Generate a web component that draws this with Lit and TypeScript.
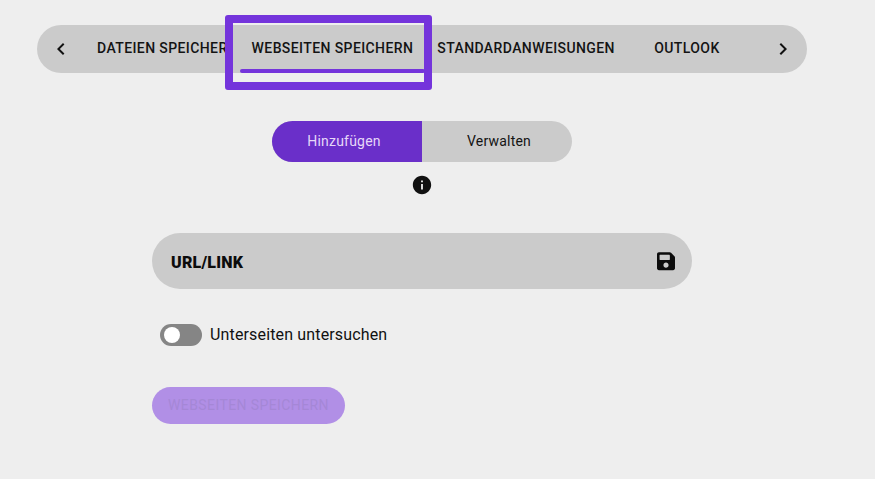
import { LitElement, html, css } from "lit";
import { customElement } from "lit/decorators.js";

@customElement("app-root")
class AppRoot extends LitElement {
  render() {
    return html`
      <div class="page">
        <nav class="tabbar">
          <button class="arrow">
            <svg viewBox="0 0 24 24" width="24" height="24"><path d="M15.41 7.41 14 6l-6 6 6 6 1.41-1.41L10.83 12z"></path></svg>
          </button>
          <div class="tabs">
            <div class="tab first"><span>DATEIEN SPEICHERN</span></div>
            <div class="tab active">WEBSEITEN SPEICHERN</div>
            <div class="tab">STANDARDANWEISUNGEN</div>
            <div class="tab outlook">OUTLOOK</div>
          </div>
          <button class="arrow">
            <svg viewBox="0 0 24 24" width="24" height="24"><path d="M10 6 8.59 7.41 13.17 12l-4.58 4.58L10 18l6-6z"></path></svg>
          </button>
          <div class="highlight"></div>
        </nav>

        <div class="mode">
          <div class="segment">
            <div class="seg on">Hinzufügen</div>
            <div class="seg off">Verwalten</div>
          </div>
          <svg class="info" viewBox="0 0 24 24" width="22" height="22">
            <path d="M12 2C6.48 2 2 6.48 2 12s4.48 10 10 10 10-4.48 10-10S17.52 2 12 2zm1 15h-2v-6h2v6zm0-8h-2V7h2v2z"></path>
          </svg>
        </div>

        <div class="form">
          <div class="field">
            <span class="field-label">URL/LINK</span>
            <svg viewBox="0 0 448 512" width="18" height="20.57">
              <path d="M433.941 129.941l-83.882-83.882A48 48 0 0 0 316.118 32H48C21.49 32 0 53.49 0 80v352c0 26.51 21.49 48 48 48h352c26.51 0 48-21.49 48-48V163.882a48 48 0 0 0-14.059-33.941zM224 416c-35.346 0-64-28.654-64-64 0-35.346 28.654-64 64-64s64 28.654 64 64c0 35.346-28.654 64-64 64zm96-304.52V212c0 6.627-5.373 12-12 12H76c-6.627 0-12-5.373-12-12V108c0-6.627 5.373-12 12-12h228.52c3.183 0 6.235 1.264 8.485 3.515l3.48 3.48A11.996 11.996 0 0 1 320 111.48z"></path>
            </svg>
          </div>
          <label class="switch-row">
            <span class="switch"><span class="knob"></span></span>
            <span>Unterseiten untersuchen</span>
          </label>
          <button class="submit" disabled>WEBSEITEN SPEICHERN</button>
        </div>
      </div>
    `;
  }

  static styles = [
    css`
      :host {
        display: block;
        font-family: Roboto, "Liberation Sans", sans-serif;
        color: #111;
      }

      .page {
        box-sizing: border-box;
        height: 479px;
        overflow: hidden;
        padding-top: 25px;
        background: #eeeeee;
      }

      .tabbar {
        position: relative;
        display: flex;
        width: 770px;
        height: 48px;
        margin-left: 37px;
        border-radius: 24px;
        background: #cbcbcb;
      }

      .arrow {
        flex: none;
        display: flex;
        align-items: center;
        justify-content: center;
        width: 48px;
        padding: 0;
        border: 0;
        background: none;
      }

      .arrow svg {
        fill: #111;
      }

      .tabs {
        flex: 1;
        display: flex;
        overflow: hidden;
      }

      .tab {
        position: relative;
        flex: none;
        box-sizing: border-box;
        padding: 0 12px;
        font-size: 14px;
        font-weight: 500;
        line-height: 47px;
        letter-spacing: 0.4px;
        white-space: nowrap;
        color: #141414;
      }

      .tab.first {
        width: 154.6px;
      }

      .tab.first span {
        display: block;
        width: 131px;
        overflow: hidden;
      }

      .tab.active::after {
        content: "";
        position: absolute;
        left: 0;
        right: 0;
        bottom: 0;
        height: 4px;
        border-radius: 2px;
        background: #7434db;
      }

      .tab.outlook {
        width: 120px;
        text-align: center;
      }

      .highlight {
        position: absolute;
        left: 188px;
        top: -10px;
        box-sizing: border-box;
        width: 207px;
        height: 75px;
        border: 8px solid #7434db;
        border-radius: 3px;
        pointer-events: none;
      }

      .mode {
        display: flex;
        flex-direction: column;
        align-items: center;
        width: 300px;
        margin: 48px 0 0 272px;
      }

      .segment {
        display: flex;
        width: 300px;
        height: 41px;
        border-radius: 21px;
        overflow: hidden;
        background: #cbcbcb;
      }

      .seg {
        flex: 0 0 150px;
        box-sizing: border-box;
        font-size: 14px;
        font-weight: 400;
        line-height: 41px;
        letter-spacing: 0.2px;
        text-align: center;
        color: #141414;
      }

      .seg.on {
        padding-right: 6px;
        background: #6a2fc9;
        color: #e6d8f8;
      }

      .seg.off {
        padding-left: 4px;
      }

      .info {
        display: block;
        margin-top: 12px;
        fill: #111;
      }

      .form {
        display: flex;
        flex-direction: column;
        align-items: flex-start;
        width: 540px;
        margin: 37px 0 0 152px;
      }

      .field {
        box-sizing: border-box;
        display: flex;
        align-items: center;
        justify-content: space-between;
        width: 100%;
        height: 56px;
        padding: 0 17px 0 19px;
        border-radius: 28px;
        background: #cbcbcb;
      }

      .field-label {
        padding-top: 2px;
        font-size: 16px;
        font-weight: 900;
        letter-spacing: 0.25px;
        color: #0c0c0c;
      }

      .field svg {
        display: block;
        fill: #0c0c0c;
      }

      .switch-row {
        display: flex;
        align-items: center;
        gap: 8px;
        margin: 35px 0 0 8px;
        font-size: 16px;
        line-height: 22px;
        letter-spacing: 0.15px;
        color: #111;
      }

      .switch {
        display: block;
        box-sizing: border-box;
        width: 42px;
        height: 22px;
        padding: 3px 3.5px;
        border-radius: 11px;
        background: #858585;
      }

      .knob {
        display: block;
        width: 16px;
        height: 16px;
        border-radius: 50%;
        background: #ffffff;
      }

      .submit {
        width: 193px;
        height: 37px;
        margin-top: 41px;
        padding: 0 0 2px;
        border: 0;
        border-radius: 18.5px;
        font-family: inherit;
        font-size: 14px;
        font-weight: 400;
        letter-spacing: 0.4px;
        background: #b18fe6;
        color: #a587d6;
      }
    `,
  ];
}

export default AppRoot;
